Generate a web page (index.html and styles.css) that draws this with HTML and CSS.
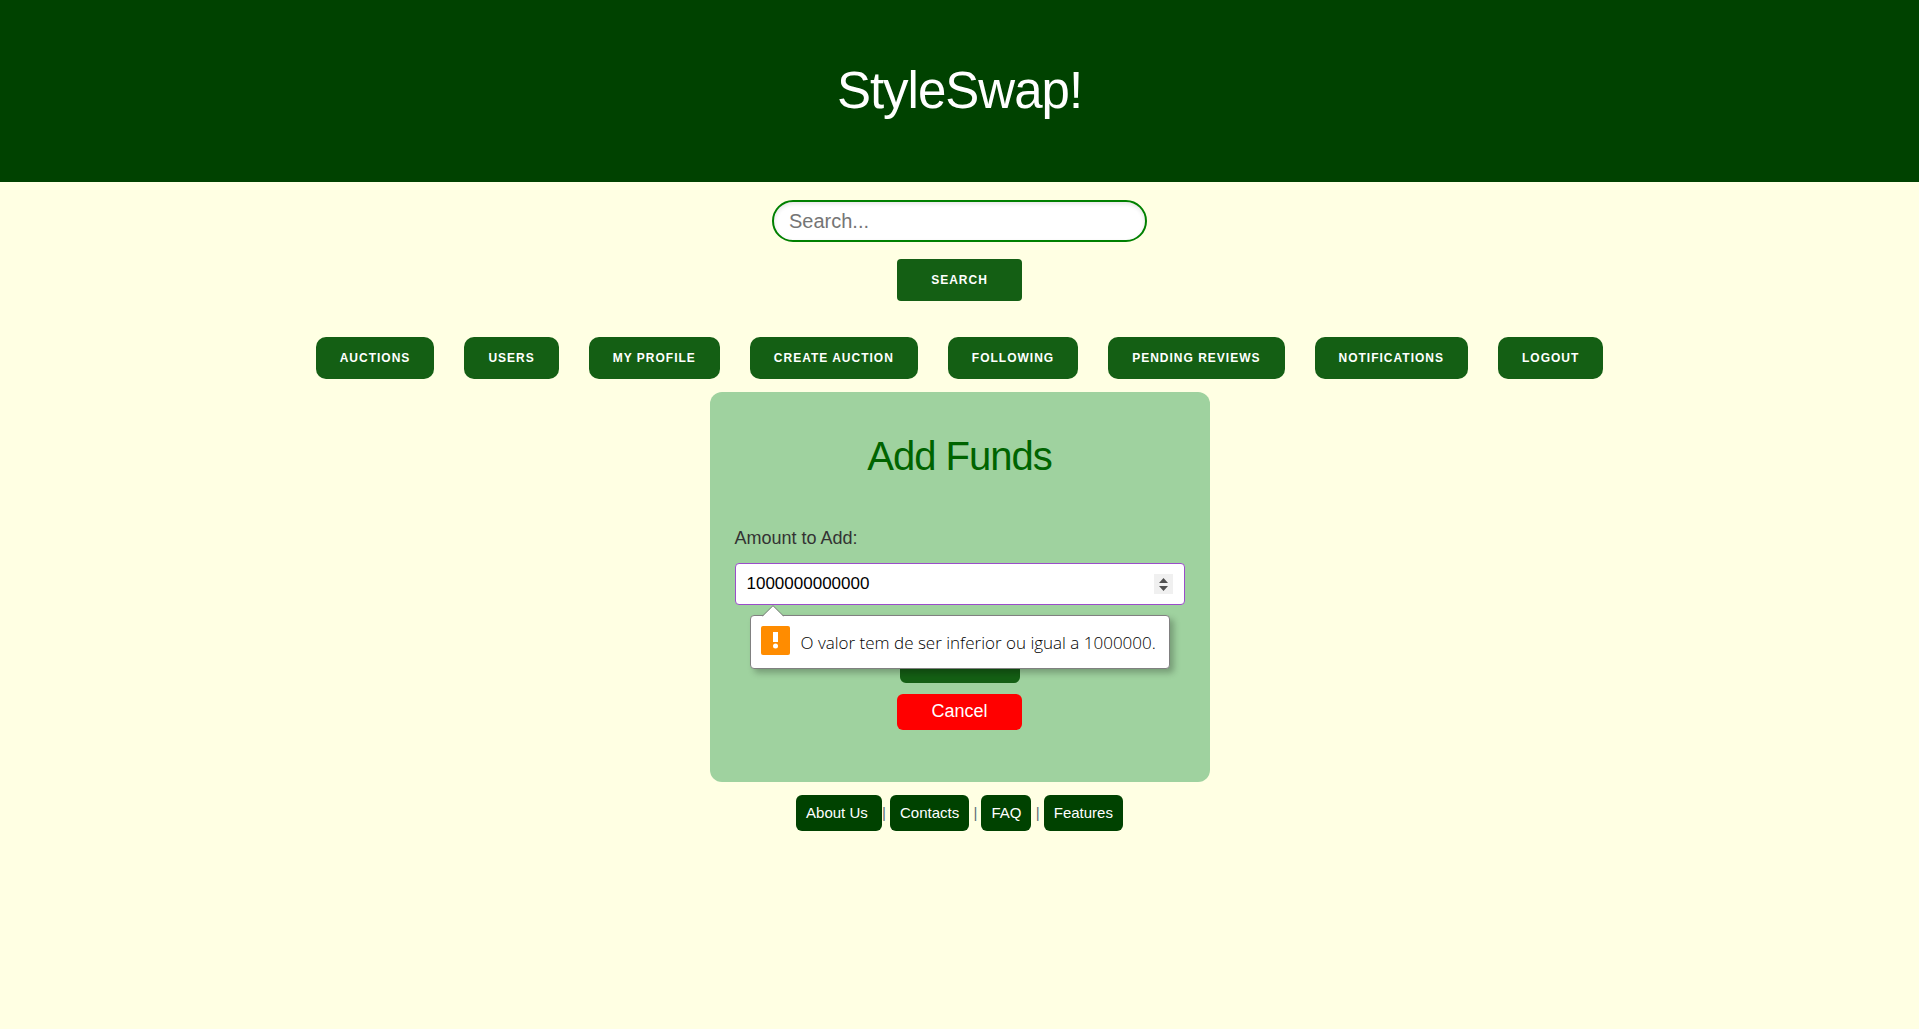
FILE: index.html
```html
<!DOCTYPE html>
<html lang="en">
<head>
<meta charset="utf-8">
<meta name="viewport" content="width=device-width, initial-scale=1">
<title>StyleSwap!</title>
<link rel="stylesheet" href="styles.css">
</head>
<body>
<header class="site-header">
  <h1 class="site-title">StyleSwap!</h1>
</header>
<form class="search" role="search">
  <input class="search-input" type="search" name="q" placeholder="Search..." aria-label="Search">
  <button class="button search-button" type="submit">Search</button>
</form>
<nav class="main-nav">
  <a class="button nav-link" href="#">Auctions</a>
  <a class="button nav-link" href="#">Users</a>
  <a class="button nav-link" href="#">My Profile</a>
  <a class="button nav-link" href="#">Create Auction</a>
  <a class="button nav-link" href="#">Following</a>
  <a class="button nav-link" href="#">Pending Reviews</a>
  <a class="button nav-link" href="#">Notifications</a>
  <a class="button nav-link" href="#">Logout</a>
</nav>
<main>
  <form class="card">
    <h2 class="card-title">Add Funds</h2>
    <label class="field-label" for="amount">Amount to Add:</label>
    <div class="field">
      <input class="field-input" id="amount" name="amount" type="number" max="1000000" value="1000000000000" aria-describedby="amount-error">
      <div class="bubble" id="amount-error" role="alert">
        <svg class="bubble-arrow" width="22" height="12" viewBox="0 0 22 12" aria-hidden="true">
          <path d="M0 12 L11 1 L22 12Z" fill="#fff"/>
          <path d="M0.500 11 L11 0.700 L21.500 11" fill="none" stroke="#808080"/>
        </svg>
        <svg class="bubble-icon" width="29" height="29" viewBox="0 0 29 29" aria-hidden="true">
          <rect width="29" height="29" rx="2" fill="#ff8c00"/>
          <path d="M12 6h5v10h-5z" fill="#fff"/>
          <circle cx="14.500" cy="20" r="2.500" fill="#fff"/>
        </svg>
        <span>O valor tem de ser inferior ou igual a 1000000.</span>
      </div>
    </div>
    <div class="actions">
      <button class="submit-button" type="submit" aria-label="Submit"></button>
      <button class="cancel-button" type="button">Cancel</button>
    </div>
  </form>
</main>
<footer class="site-footer">
  <a class="footer-link" href="#">About Us&nbsp;</a>| <a class="footer-link" href="#">Contacts</a> | <a class="footer-link" href="#">FAQ</a> | <a class="footer-link" href="#">Features</a>
</footer>
</body>
</html>
```

FILE: styles.css
```css
* {
  box-sizing: border-box;
}

body {
  margin: 0;
  background: #ffffe3;
  color: #606c76;
  font-family: "Liberation Sans", Arial, sans-serif;
}

.site-header {
  padding: 60px 20px;
  background: #004200;
  text-align: center;
}

.site-title {
  margin: 0;
  color: #fff;
  font-size: 51px;
  font-weight: 400;
  line-height: 62px;
  letter-spacing: -1px;
}

.button {
  height: 42px;
  border: 0;
  background: #145f14;
  color: #fff;
  font-family: inherit;
  font-size: 12px;
  font-weight: 700;
  line-height: 42px;
  letter-spacing: 1px;
  text-transform: uppercase;
  text-decoration: none;
  white-space: nowrap;
}

.search {
  display: flex;
  flex-direction: column;
  align-items: center;
  gap: 17px;
  padding: 18px 20px 0;
}

.search-input {
  width: 100%;
  max-width: 375px;
  height: 42px;
  padding: 0 15px;
  border: 2px solid #008000;
  border-radius: 21px;
  outline: 0;
  background: #fff;
  box-shadow: inset 0 2px 4px rgba(0, 0, 0, 0.1);
  appearance: none;
  font-family: inherit;
  font-size: 20px;
}

.search-input::placeholder {
  color: #757575;
}

.search-button {
  padding: 0 34px;
  border-radius: 4px;
}

.main-nav {
  display: flex;
  flex-wrap: wrap;
  justify-content: center;
  gap: 13px 30px;
  padding: 36px 20px 13px;
}

.nav-link {
  padding: 0 24px;
  border-radius: 10px;
}

.card {
  max-width: 500px;
  margin: 0 auto;
  padding: 40px 25px 52px;
  border-radius: 12px;
  background: #9fd29f;
}

.card-title {
  margin: 0 0 46px;
  color: #006400;
  font-size: 40px;
  font-weight: 400;
  line-height: 48px;
  letter-spacing: -1px;
  text-align: center;
}

.field-label {
  display: block;
  margin-bottom: 13px;
  color: #333;
  font-size: 18px;
  line-height: 24px;
}

.field {
  position: relative;
}

.field-input {
  display: block;
  width: 100%;
  height: 42px;
  padding: 0 11px;
  border: 1px solid #9b4dca;
  border-radius: 4px;
  outline: 0;
  background: #fff;
  color: #000;
  font-family: inherit;
  font-size: 17px;
}

.field-input::-webkit-inner-spin-button {
  width: 19px;
  height: 20px;
  appearance: none;
  background: #f0f0f0 url("data:image/svg+xml,%3Csvg xmlns='http://www.w3.org/2000/svg' width='19' height='20'%3E%3Cpath d='M5 9L9.5 4L14 9ZM5 12L9.500 17L14 12Z' fill='%23505050'/%3E%3C/svg%3E") no-repeat;
  opacity: 1;
}

.bubble {
  position: absolute;
  top: 52px;
  left: 15px;
  display: flex;
  align-items: center;
  gap: 11px;
  height: 54px;
  padding: 0 13px 0 10px;
  border: 1px solid #808080;
  border-radius: 4px;
  background: #fff;
  box-shadow: 4px 4px 6px rgba(0, 0, 0, 0.25);
  color: #000;
  font-family: "Open Sans", "Noto Sans", sans-serif;
  font-size: 17px;
  font-weight: 300;
  white-space: nowrap;
}

.bubble-arrow {
  position: absolute;
  top: -11px;
  left: 11px;
}

.bubble-icon {
  margin-bottom: 4px;
}

.actions {
  display: flex;
  flex-direction: column;
  align-items: center;
  gap: 11px;
  margin-top: 42px;
}

.submit-button {
  width: 120px;
  height: 36px;
  border: 0;
  border-radius: 6px;
  background: #145f14;
}

.cancel-button {
  height: 36px;
  padding: 0 34px 2px;
  border: 0;
  border-radius: 6px;
  background: #f00;
  color: #fff;
  font-family: inherit;
  font-size: 18px;
}

.site-footer {
  padding: 13px 20px;
  font-size: 15px;
  line-height: 36px;
  text-align: center;
}

.footer-link {
  display: inline-block;
  padding: 0 10px;
  border-radius: 6px;
  background: #004200;
  color: #fff;
  text-decoration: none;
}
```
